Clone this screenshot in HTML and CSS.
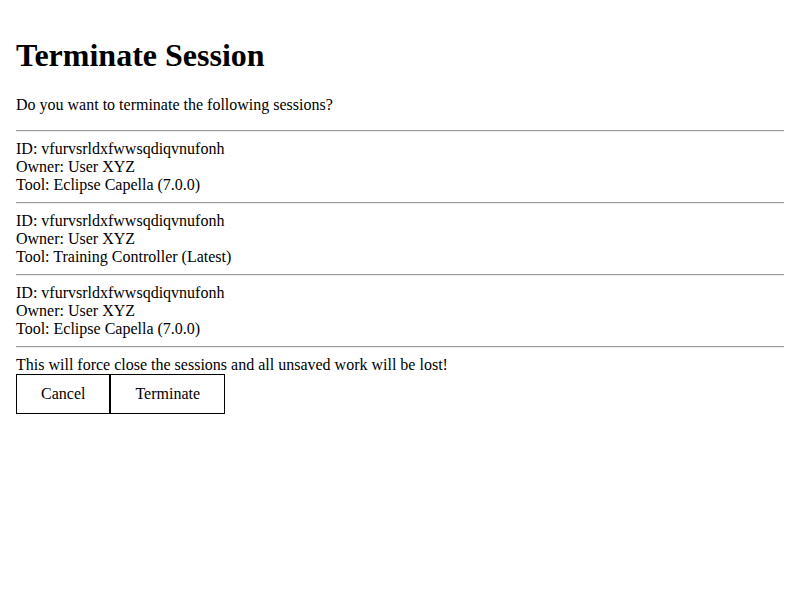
FILE: index.html
```html
<!DOCTYPE html>
<html>
<head>
<meta charset="utf-8">
<link rel="stylesheet" href="styles.css">
</head>
<body>
<div class="dialog">
  <h1 class="title">Terminate Session</h1>
  <p class="question">Do you want to terminate the following sessions?</p>
  <hr class="divider">
  <div class="session">
    <div>ID: vfurvsrldxfwwsqdiqvnufonh</div>
    <div>Owner: User XYZ</div>
    <div>Tool: Eclipse Capella (7.0.0)</div>
  </div>
  <hr class="divider">
  <div class="session">
    <div>ID: vfurvsrldxfwwsqdiqvnufonh</div>
    <div>Owner: User XYZ</div>
    <div>Tool: Training Controller (Latest)</div>
  </div>
  <hr class="divider">
  <div class="session">
    <div>ID: vfurvsrldxfwwsqdiqvnufonh</div>
    <div>Owner: User XYZ</div>
    <div>Tool: Eclipse Capella (7.0.0)</div>
  </div>
  <hr class="divider">
  <div class="warning">This will force close the sessions and all unsaved work will be lost!</div>
  <div class="actions">
    <button class="btn">Cancel</button>
    <button class="btn">Terminate</button>
  </div>
</div>
</body>
</html>
```
FILE: styles.css
```css
html, body {
  background: #ffffff;
}
body {
  margin: 8px;
  font-family: "Liberation Serif", "Times New Roman", serif;
  font-size: 16px;
  color: #000;
}
.dialog {
  padding: 8px;
}
.title {
  font-size: 32px;
  font-weight: bold;
  margin: 21.44px 0;
}
.question {
  margin: 16px 0;
}
.divider {
  margin: 8px 0;
  border: 0;
  border-top: 1px solid #9a9a9a;
  border-bottom: 1px solid #eeeeee;
  height: 0;
}
.session {
  line-height: 18px;
}
.warning {
  line-height: 18px;
}
.actions {
  display: flex;
}
.btn {
  font-family: "Liberation Serif", "Times New Roman", serif;
  font-size: 16px;
  line-height: 18px;
  color: #000;
  background: #fff;
  border: 1px solid #000;
  padding: 10px 24px;
  margin: 0;
  border-radius: 0;
}
```
